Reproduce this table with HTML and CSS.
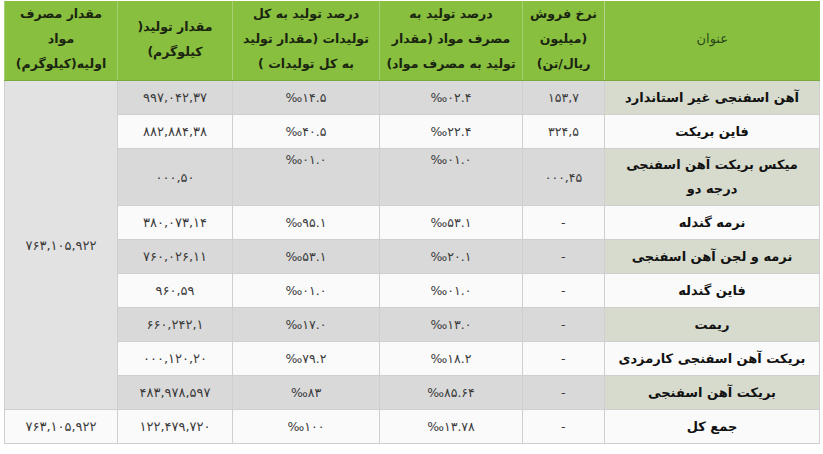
FILE: index.html
```html
<!DOCTYPE html>
<html lang="fa" dir="rtl">
<head>
<meta charset="utf-8">
<title>جدول تولید</title>
<link rel="stylesheet" href="styles.css">
</head>
<body>
<table class="tbl">
  <colgroup>
    <col class="c-f"><col class="c-e"><col class="c-d"><col class="c-c"><col class="c-b"><col class="c-a">
  </colgroup>
  <thead>
    <tr class="head">
      <th class="th-title">عنوان</th>
      <th>نرخ فروش<br>(میلیون<br>ریال/تن)</th>
      <th>درصد تولید به<br>مصرف مواد (مقدار<br>تولید به مصرف مواد)</th>
      <th>درصد تولید به کل<br>تولیدات (مقدار تولید<br>به کل تولیدات )</th>
      <th>مقدار تولید(<br>کیلوگرم)</th>
      <th>مقدار مصرف<br>مواد<br>اولیه(کیلوگرم)</th>
    </tr>
  </thead>
  <tbody>
    <tr class="r gray">
      <td class="title">آهن اسفنجی غیر استاندارد</td>
      <td class="n">۱۵۳,۷</td>
      <td class="n">‰۰۲.۴</td>
      <td class="n">‰۱۴.۵</td>
      <td class="n w">۹۹۷,۰۴۲,۳۷</td>
      <td class="n w merged" rowspan="9">۷۶۳,۱۰۵,۹۲۲</td>
    </tr>
    <tr class="r white">
      <td class="title">فاین بریکت</td>
      <td class="n">۳۲۴,۵</td>
      <td class="n">‰۲۲.۴</td>
      <td class="n">‰۴۰.۵</td>
      <td class="n w">۸۸۲,۸۸۴,۳۸</td>
    </tr>
    <tr class="r gray tall">
      <td class="title">میکس بریکت آهن اسفنجی<br>درجه دو</td>
      <td class="n">۰۰۰,۴۵</td>
      <td class="n top">‰۰۱.۰</td>
      <td class="n top">‰۰۱.۰</td>
      <td class="n w">۰۰۰,۵۰</td>
    </tr>
    <tr class="r white">
      <td class="title">نرمه گندله</td>
      <td class="n">-</td>
      <td class="n">‰۵۳.۱</td>
      <td class="n">‰۹۵.۱</td>
      <td class="n w">۳۸۰,۰۷۳,۱۴</td>
    </tr>
    <tr class="r gray">
      <td class="title">نرمه و لجن آهن اسفنجی</td>
      <td class="n">-</td>
      <td class="n">‰۲۰.۱</td>
      <td class="n">‰۵۳.۱</td>
      <td class="n w">۷۶۰,۰۲۶,۱۱</td>
    </tr>
    <tr class="r white">
      <td class="title">فاین گندله</td>
      <td class="n">-</td>
      <td class="n">‰۰۱.۰</td>
      <td class="n">‰۰۱.۰</td>
      <td class="n w">۹۶۰,۵۹</td>
    </tr>
    <tr class="r gray">
      <td class="title">ریمت</td>
      <td class="n">-</td>
      <td class="n">‰۱۳.۰</td>
      <td class="n">‰۱۷.۰</td>
      <td class="n w">۶۶۰,۲۴۲,۱</td>
    </tr>
    <tr class="r white">
      <td class="title">بریکت آهن اسفنجی کارمزدی</td>
      <td class="n">-</td>
      <td class="n">‰۱۸.۲</td>
      <td class="n">‰۷۹.۲</td>
      <td class="n w">۰۰۰,۱۲۰,۲۰</td>
    </tr>
    <tr class="r gray">
      <td class="title">بریکت آهن اسفنجی</td>
      <td class="n">-</td>
      <td class="n">‰۸۵.۶۴</td>
      <td class="n">‰۸۳</td>
      <td class="n w">۴۸۳,۹۷۸,۵۹۷</td>
    </tr>
    <tr class="r white">
      <td class="title">جمع کل</td>
      <td class="n">-</td>
      <td class="n">‰۱۳.۷۸</td>
      <td class="n">‰۱۰۰</td>
      <td class="n w">۱۲۲,۴۷۹,۷۲۰</td>
      <td class="n w">۷۶۳,۱۰۵,۹۲۲</td>
    </tr>
  </tbody>
</table>
</body>
</html>
```

FILE: styles.css
```css
html, body {
  margin: 0;
  padding: 0;
  background: #ffffff;
}
body {
  padding: 1px 3px 0 5px;
  font-family: "DejaVu Sans", "Noto Sans", sans-serif;
  color: #222;
}
.tbl {
  border-collapse: collapse;
  table-layout: fixed;
  width: 815px;
  border-left: 1px solid #a8a8a8;
}
.c-f { width: 215px; }
.c-e { width: 82px; }
.c-d { width: 143px; }
.c-c { width: 147px; }
.c-b { width: 115px; }
.c-a { width: 113px; }

.head th {
  height: 74px;
  padding: 0 4px 4px;
  background: #88bf3f;
  color: #1a2410;
  font-size: 12.5px;
  font-weight: bold;
  line-height: 25px;
  text-align: center;
  vertical-align: middle;
  border-left: 1px solid #a6cf74;
  border-bottom: 1px solid #7aa83a;
}
.head .th-title {
  font-weight: normal;
  font-size: 13px;
  color: #2b4a18;
  border-left: 1px solid #b3d68a;
}
.r td {
  height: 33px;
  padding: 0 4px;
  text-align: center;
  vertical-align: middle;
  border: 1px solid #cfcfcf;
}
.r.tall td { height: 56px; }
.gray td { background: #d9d9d9; }
.white td { background: #fafafa; }
.gray td.title { background: #d6dbcd; }
.r td.merged { background: #e2e2e2; }
.title {
  font-size: 13px;
  font-weight: bold;
  color: #111;
  line-height: 24px;
}
.n {
  direction: ltr;
  unicode-bidi: bidi-override;
  font-size: 12.5px;
  color: #3a3a3a;
  letter-spacing: 0.6px;
}
.n.w {
  font-size: 13px;
  letter-spacing: 2.3px;
}
.r.tall td.top {
  vertical-align: top;
  padding-top: 3px;
  height: 53px;
}
```
